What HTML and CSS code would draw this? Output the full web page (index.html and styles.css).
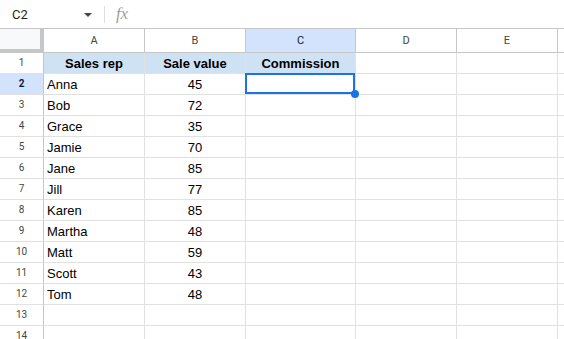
FILE: index.html
```html
<!DOCTYPE html>
<html>
<head>
<meta charset="utf-8">
<link rel="stylesheet" href="styles.css">
</head>
<body>
<div class="formula-bar">
  <div class="namebox">C2</div>
  <div class="dropdown"></div>
  <div class="sep"></div>
  <div class="fx">fx</div>
</div>
<div class="sheet">
  <div class="corner"></div>
  <div class="ch">A</div><div class="ch">B</div><div class="ch ch-sel">C</div><div class="ch">D</div><div class="ch">E</div><div class="ch ch-last"></div>

  <div class="rh">1</div>
  <div class="c head">Sales rep</div><div class="c head">Sale value</div><div class="c head">Commission</div><div class="c"></div><div class="c"></div><div class="c"></div>

  <div class="rh rh-sel">2</div>
  <div class="c">Anna</div><div class="c num">45</div><div class="c active"><div class="selection"><span class="handle"></span></div></div><div class="c"></div><div class="c"></div><div class="c"></div>

  <div class="rh">3</div>
  <div class="c">Bob</div><div class="c num">72</div><div class="c"></div><div class="c"></div><div class="c"></div><div class="c"></div>

  <div class="rh">4</div>
  <div class="c">Grace</div><div class="c num">35</div><div class="c"></div><div class="c"></div><div class="c"></div><div class="c"></div>

  <div class="rh">5</div>
  <div class="c">Jamie</div><div class="c num">70</div><div class="c"></div><div class="c"></div><div class="c"></div><div class="c"></div>

  <div class="rh">6</div>
  <div class="c">Jane</div><div class="c num">85</div><div class="c"></div><div class="c"></div><div class="c"></div><div class="c"></div>

  <div class="rh">7</div>
  <div class="c">Jill</div><div class="c num">77</div><div class="c"></div><div class="c"></div><div class="c"></div><div class="c"></div>

  <div class="rh">8</div>
  <div class="c">Karen</div><div class="c num">85</div><div class="c"></div><div class="c"></div><div class="c"></div><div class="c"></div>

  <div class="rh">9</div>
  <div class="c">Martha</div><div class="c num">48</div><div class="c"></div><div class="c"></div><div class="c"></div><div class="c"></div>

  <div class="rh">10</div>
  <div class="c">Matt</div><div class="c num">59</div><div class="c"></div><div class="c"></div><div class="c"></div><div class="c"></div>

  <div class="rh">11</div>
  <div class="c">Scott</div><div class="c num">43</div><div class="c"></div><div class="c"></div><div class="c"></div><div class="c"></div>

  <div class="rh">12</div>
  <div class="c">Tom</div><div class="c num">48</div><div class="c"></div><div class="c"></div><div class="c"></div><div class="c"></div>

  <div class="rh">13</div>
  <div class="c"></div><div class="c"></div><div class="c"></div><div class="c"></div><div class="c"></div><div class="c"></div>

  <div class="rh">14</div>
  <div class="c"></div><div class="c"></div><div class="c"></div><div class="c"></div><div class="c"></div><div class="c"></div>
</div>
</body>
</html>
```

FILE: styles.css
```css
html, body {
  margin: 0;
  padding: 0;
  background: #ffffff;
  overflow: hidden;
}

.formula-bar {
  height: 28px;
  border-bottom: 1px solid #c7c7c7;
  display: flex;
  align-items: center;
  font-family: Roboto, "Liberation Sans", sans-serif;
}

.namebox {
  width: 72px;
  padding-left: 12px;
  font-size: 13px;
  color: #1f1f1f;
}

.dropdown {
  width: 0;
  height: 0;
  border-left: 4px solid transparent;
  border-right: 4px solid transparent;
  border-top: 4px solid #444746;
  margin-top: 1px;
}

.sep {
  width: 1px;
  height: 17px;
  background: #dadce0;
  margin-left: 12px;
}

.fx {
  margin-left: 11px;
  font-family: "Liberation Serif", serif;
  font-style: italic;
  font-size: 17px;
  color: #a0a0a0;
  letter-spacing: -0.3px;
}

.sheet {
  display: grid;
  grid-template-columns: 44px 101px 101px 110px 101px 101px 1fr;
  grid-template-rows: 24px;
  grid-auto-rows: 21px;
  font-family: "Liberation Sans", Arial, sans-serif;
  font-size: 13px;
  color: #000;
}

.sheet > div {
  box-sizing: border-box;
}

.corner {
  background: #f8f9fa;
  border-right: 4px solid #c4c7c5;
  border-bottom: 4px solid #c4c7c5;
}

.ch {
  border-right: 1px solid #c4c7c5;
  border-bottom: 1px solid #c4c7c5;
  text-align: center;
  font-family: Roboto, "Liberation Sans", sans-serif;
  font-size: 11px;
  line-height: 23px;
  color: #444746;
}

.ch-sel {
  background: #d3e3fd;
  color: #0b1d3a;
}

.ch-last {
  border-right: none;
}

.rh {
  border-right: 1px solid #c4c7c5;
  border-bottom: 1px solid #e1e1e1;
  text-align: center;
  font-family: Roboto, "Liberation Sans", sans-serif;
  font-size: 10px;
  line-height: 20px;
  color: #444746;
}

.rh-sel {
  background: #d3e3fd;
  color: #0b1d3a;
  font-weight: bold;
}

.c {
  border-right: 1px solid #e1e1e1;
  border-bottom: 1px solid #e1e1e1;
  padding: 1px 3px 0;
  line-height: 19px;
  white-space: nowrap;
}

.num {
  text-align: center;
}

.head {
  background: #cfe2f3;
  font-weight: bold;
  text-align: center;
}

.active {
  position: relative;
}

.selection {
  position: absolute;
  left: -1px;
  top: -1px;
  right: 0;
  bottom: 0;
  border: 2px solid #1a73e8;
}

.handle {
  position: absolute;
  right: -6px;
  bottom: -6px;
  width: 8px;
  height: 8px;
  border-radius: 50%;
  background: #1a73e8;
}
```
